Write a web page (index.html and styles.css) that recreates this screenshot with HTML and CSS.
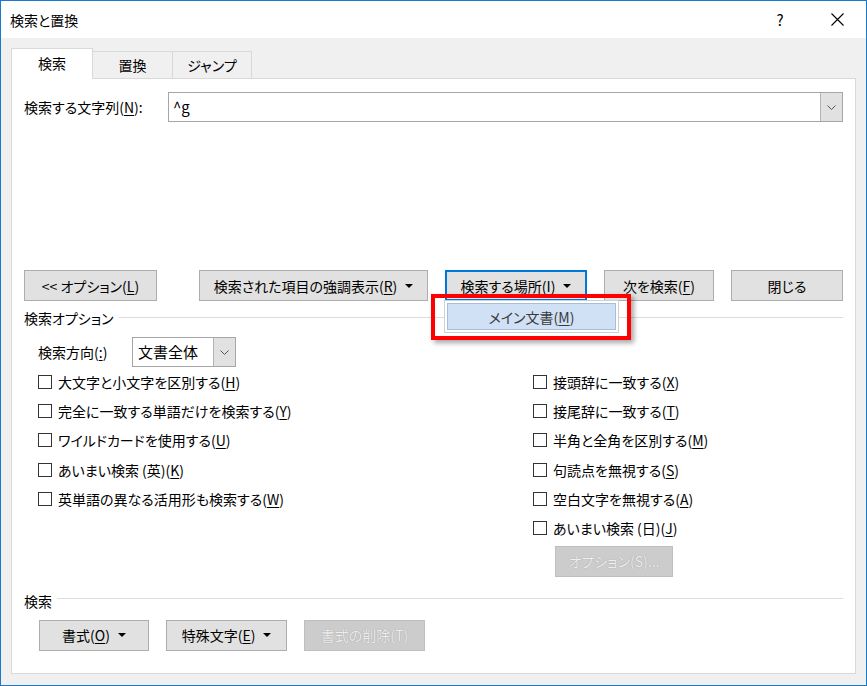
FILE: index.html
```html
<!DOCTYPE html>
<html lang="ja">
<head>
<meta charset="utf-8">
<title>検索と置換</title>
<link rel="stylesheet" href="styles.css">
</head>
<body>
<div class="window">
  <div class="titlebar">
    <span class="title">検索と置換</span>
    <span class="help">?</span>
    <svg class="close" width="13" height="13" viewBox="0 0 13 13"><path d="M0.5 0.5 L12.5 12.5 M12.5 0.5 L0.5 12.5" stroke="#000" stroke-width="1.1" fill="none"/></svg>
  </div>
  <div class="body">
    <div class="tabs">
      <div class="tab tab-find active">検索</div>
      <div class="tab tab-replace">置換</div>
      <div class="tab tab-jump">ジャンプ</div>
    </div>
    <div class="panel">
      <div class="find-row">
        <span class="find-label">検索する文字列(<u>N</u>):</span>
        <div class="combo find-combo">
          <span class="combo-text find-text">^g</span>
          <span class="combo-btn"><svg width="9" height="5" viewBox="0 0 9 5"><path d="M0.5 0.5 L4.5 4.5 L8.5 0.5" stroke="#555" stroke-width="1" fill="none"/></svg></span>
        </div>
      </div>

      <div class="btn-row">
        <div class="btn b-options">&lt;&lt; オプション(<u>L</u>)</div>
        <div class="btn b-highlight">検索された項目の強調表示(<u>R</u>)<span class="caret"></span></div>
        <div class="btn b-where focused">検索する場所(I)<span class="caret"></span></div>
        <div class="btn b-next">次を検索(<u>F</u>)</div>
        <div class="btn b-close">閉じる</div>
      </div>

      <div class="section section-options"><span>検索オプション</span></div>

      <div class="dir-row">
        <span class="dir-label">検索方向(<u>:</u>)</span>
        <div class="combo dir-combo">
          <span class="combo-text dir-text">文書全体</span>
          <span class="combo-btn"><svg width="9" height="5" viewBox="0 0 9 5"><path d="M0.5 0.5 L4.5 4.5 L8.5 0.5" stroke="#555" stroke-width="1" fill="none"/></svg></span>
        </div>
      </div>

      <div class="options">
        <div class="col col-left">
          <div class="check"><span class="box"></span>大文字と小文字を区別する(<u>H</u>)</div>
          <div class="check"><span class="box"></span>完全に一致する単語だけを検索する(<u>Y</u>)</div>
          <div class="check"><span class="box"></span>ワイルドカードを使用する(<u>U</u>)</div>
          <div class="check"><span class="box"></span>あいまい検索 (英)(<u>K</u>)</div>
          <div class="check"><span class="box"></span>英単語の異なる活用形も検索する(<u>W</u>)</div>
        </div>
        <div class="col col-right">
          <div class="check"><span class="box"></span>接頭辞に一致する(<u>X</u>)</div>
          <div class="check"><span class="box"></span>接尾辞に一致する(<u>T</u>)</div>
          <div class="check"><span class="box"></span>半角と全角を区別する(<u>M</u>)</div>
          <div class="check"><span class="box"></span>句読点を無視する(<u>S</u>)</div>
          <div class="check"><span class="box"></span>空白文字を無視する(<u>A</u>)</div>
          <div class="check"><span class="box"></span>あいまい検索 (日)(<u>J</u>)</div>
          <div class="btn disabled b-jopt">オプション(S)...</div>
        </div>
      </div>

      <div class="section section-find"><span>検索</span></div>

      <div class="bottom-row">
        <div class="btn b-format">書式(<u>O</u>)<span class="caret"></span></div>
        <div class="btn b-special">特殊文字(<u>E</u>)<span class="caret"></span></div>
        <div class="btn disabled b-clear">書式の削除(T)</div>
      </div>

      <div class="menu"><div class="menu-item">メイン文書(<u>M</u>)</div></div>
      <div class="callout"></div>
    </div>
  </div>
</div>
</body>
</html>
```
FILE: styles.css
```css
* { box-sizing: border-box; }

body {
  margin: 0;
  font-family: "Noto Sans CJK JP", "Noto Sans", sans-serif;
  font-size: 14px;
  color: #000;
  font-feature-settings: "palt";
}

u {
  text-decoration: underline;
  text-underline-offset: 2px;
  text-decoration-thickness: 1px;
}

.window {
  width: 867px;
  height: 686px;
  border: 1px solid #1979ca;
  background: #f0f0f0;
  display: flex;
  flex-direction: column;
}

.titlebar {
  flex: none;
  height: 37px;
  background: #fff;
  display: flex;
  align-items: center;
  padding-left: 9px;
}

.title { line-height: 20px; }

.help {
  margin-left: auto;
  font-size: 15px;
  line-height: 20px;
  width: 8px;
  text-align: center;
  font-feature-settings: normal;
}

.close {
  margin-left: 47px;
  margin-right: 22px;
}

.body {
  padding: 10px 0 0 10px;
}

.tabs {
  display: flex;
  align-items: flex-end;
  height: 30px;
}

.tab {
  height: 27px;
  border: 1px solid #d9d9d9;
  border-bottom: none;
  background: #f0f0f0;
  display: flex;
  align-items: center;
  justify-content: center;
  line-height: 20px;
  margin-left: -1px;
}

.tab.active {
  height: 31px;
  margin-left: 0;
  margin-bottom: -1px;
  background: #fff;
  position: relative;
  z-index: 1;
  padding-bottom: 2px;
}

.tab-find { width: 82px; }
.tab-replace { width: 81px; }
.tab-jump { width: 80px; }

.panel {
  width: 845px;
  height: 596px;
  background: #fff;
  border: 1px solid #d9d9d9;
  position: relative;
  padding: 13px 12px 0 12px;
}

.find-row {
  display: flex;
  align-items: center;
  height: 30px;
}

.find-label {
  width: 144px;
  line-height: 20px;
}

.combo {
  height: 30px;
  border: 1px solid #a6a6a6;
  background: #fff;
  display: flex;
}

.find-combo { width: 675px; }

.combo-text {
  flex: 1;
  line-height: 28px;
}

.find-text {
  padding-left: 4px;
  font-size: 15px;
}

.combo-btn {
  width: 22px;
  background: #e1e1e1;
  border-left: 1px solid #b4b4b4;
  display: flex;
  align-items: center;
  justify-content: center;
}

.btn-row {
  display: flex;
  gap: 17px;
  margin-top: 148px;
}

.btn {
  height: 31px;
  background: #e1e1e1;
  border: 1px solid #adadad;
  display: flex;
  align-items: center;
  justify-content: center;
  line-height: 20px;
  white-space: nowrap;
}

.btn.focused { border: 2px solid #0078d7; }

.btn.disabled {
  background: #cccccc;
  border-color: #bfbfbf;
  color: #eeeeee;
  text-shadow: 0 0 1px #8c8c8c;
}

.caret {
  width: 0;
  height: 0;
  border-left: 4px solid transparent;
  border-right: 4px solid transparent;
  border-top: 4px solid #000;
  margin-left: 8px;
}

.b-options { width: 133px; }
.b-highlight { width: 229px; margin-left: 25px; }
.b-where { width: 142px; }
.b-next { width: 110px; }
.b-close { width: 112px; }

.section {
  display: flex;
  align-items: center;
  line-height: 20px;
}

.section::after {
  content: "";
  flex: 1;
  height: 1px;
  background: #dcdcdc;
  margin-left: 5px;
  margin-top: -1px;
}

.section-options { margin-top: 7px; }
.section-find { margin-top: 14px; }
.section-find::after { margin-top: -4px; }

.dir-row {
  display: flex;
  align-items: center;
  height: 30px;
  margin-top: 9px;
  padding-left: 14px;
}

.dir-label {
  width: 94px;
  line-height: 20px;
}

.dir-combo { width: 104px; }

.dir-text {
  padding-left: 5px;
  font-size: 15px;
}

.options {
  display: flex;
  margin-top: 0;
  padding-left: 14px;
}

.col {
  display: flex;
  flex-direction: column;
}

.col-left { width: 495px; }

.check {
  display: flex;
  align-items: center;
  height: 29.3px;
  line-height: 20px;
  white-space: nowrap;
}

.box {
  width: 14px;
  height: 14px;
  border: 1px solid #333;
  background: #fff;
  margin-right: 6px;
  flex: none;
}

.b-jopt {
  width: 118px;
  margin-top: 3px;
  margin-left: 22px;
}

.bottom-row {
  display: flex;
  gap: 17px;
  margin-top: 9px;
  padding-left: 15px;
}

.b-format { width: 110px; }
.b-special { width: 121px; }
.b-clear { width: 121px; }

.menu {
  position: absolute;
  left: 432px;
  top: 221px;
  width: 175px;
  height: 33px;
  background: #fff;
  border: 1px solid #cfcfcf;
  padding: 2px;
}

.menu-item {
  height: 27px;
  background: #d0e0f5;
  border: 1px solid #a3bfe4;
  display: flex;
  align-items: center;
  justify-content: center;
  color: #3a3a3a;
  line-height: 20px;
}

.callout {
  position: absolute;
  left: 419px;
  top: 215px;
  width: 200px;
  height: 46px;
  border: 4px solid #ff0000;
  box-shadow: 3px 3px 5px rgba(0, 0, 0, 0.35);
}
```
